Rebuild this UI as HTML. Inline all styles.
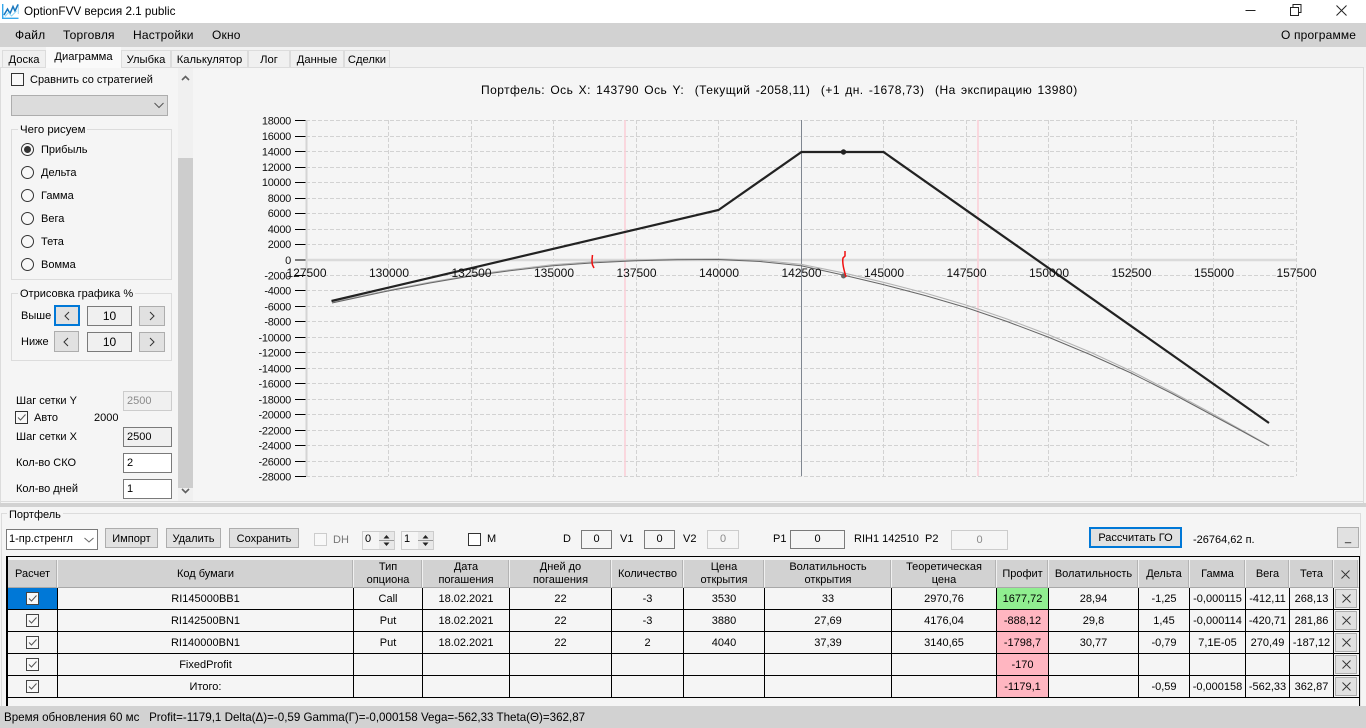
<!DOCTYPE html>
<html lang="ru"><head><meta charset="utf-8"><title>OptionFVV</title>
<style>
html,body{margin:0;padding:0;width:1366px;height:728px;overflow:hidden;background:#f5f5f5}
body{position:relative;font-family:"Liberation Sans",sans-serif;font-size:11px;color:#000}
.a{position:absolute;box-sizing:border-box}
.t{position:absolute;white-space:nowrap;line-height:14px;height:14px}
.b{position:absolute;box-sizing:border-box;background:#e1e1e1;border:1px solid #adadad;text-align:center;white-space:nowrap}
.i{position:absolute;box-sizing:border-box;background:#f5f5f5;border:1px solid #7a7a7a;text-align:center;white-space:nowrap}
.off{border-color:#ccc;color:#8a8a8a}
.tab{position:absolute;top:50px;height:17px;box-sizing:border-box;background:#f0f0f0;border:1px solid #dcdcdc;border-bottom:0;text-align:center;line-height:18px;font-size:11.2px}
.r{position:absolute;left:21px;width:13px;height:13px;border:1px solid #333;border-radius:50%;box-sizing:border-box;background:#f8f8f8}
.cb{position:absolute;width:13px;height:13px;box-sizing:border-box;border:1px solid #333;background:#f8f8f8}
.gb{position:absolute;box-sizing:border-box;border:1px solid #dcdcdc}
.lg{position:absolute;background:#f5f5f5;padding:0 2px;line-height:14px;white-space:nowrap;font-size:11px}
table{position:absolute;left:8px;top:560px;width:1351px;table-layout:fixed;border-collapse:separate;border-spacing:0}
th{height:28px;background:#d2d2d2;font-weight:normal;border-right:1px solid #f0f0f0;border-bottom:1px solid #a8a8a8;box-sizing:border-box;padding:1px 0 0;line-height:13px;box-shadow:inset -1px 0 0 #b4b4b4}
td{height:22px;box-sizing:border-box;border-right:1px solid #000;border-bottom:1px solid #000;text-align:center;padding:0;white-space:nowrap;position:relative;overflow:hidden}
td .cb{left:18px;top:4px;border-color:#444}
.g{background:#90ee90}.p{background:#ffb6c1}
.x{position:absolute;left:1px;top:1px;width:22px;height:19px;background:#e1e1e1;border:1px solid #adadad;box-sizing:border-box}
svg{display:block}
.chev{position:absolute}
</style></head><body>
<svg width="0" height="0" style="position:absolute"><symbol id="ck" viewBox="0 0 11 11"><path d="M2 5.500 4.500 8 9.500 2.500" fill="none" stroke="#555" stroke-width="1"/></symbol><symbol id="xx" viewBox="0 0 9 9"><path d="M.5.5 8.500 8.500M8.500.5.500 8.500" fill="none" stroke="#333" stroke-width=".9"/></symbol></svg>

<!-- title bar -->
<div class="a" style="left:0;top:0;width:1366px;height:23px;background:#fff"></div>
<svg class="a" style="left:2px;top:3px" width="17" height="16" viewBox="0 0 17 16"><path d="M.7 1V15.300H16.500" fill="none" stroke="#35a8ec" stroke-width="1.400"/><path d="M16.300 1V11" fill="none" stroke="#9fd6f5" stroke-width="1"/><path d="M2 12 5.500 6 8 10.500 11 3.500 13 8 16 1.500" fill="none" stroke="#1776bd" stroke-width="1.500"/><path d="M3 13.500 6.500 9.500 9.500 13 14.500 8" fill="none" stroke="#8fd8f8" stroke-width="1"/></svg>
<div class="t" style="left:24px;top:5px;font-size:11.7px">OptionFVV версия 2.1 public</div>
<svg class="a" style="left:1240px;top:0" width="120" height="20" viewBox="0 0 120 20"><path d="M5.500 10.500H15.500" stroke="#222"/><path d="M50.500 7.500H58.500V15.500H50.500ZM53 7V4.500H61V12.500H58.500" fill="none" stroke="#222"/><path d="M96.500 5.500 106.500 15.500M106.500 5.500 96.500 15.500" stroke="#222"/></svg>

<!-- menu -->
<div class="a" style="left:0;top:23px;width:1366px;height:24px;background:#d2d2d2"></div>
<div class="t" style="left:15px;top:28px;font-size:12px;letter-spacing:.2px">Файл</div>
<div class="t" style="left:63px;top:28px;font-size:12px;letter-spacing:.2px">Торговля</div>
<div class="t" style="left:133px;top:28px;font-size:12px;letter-spacing:.2px">Настройки</div>
<div class="t" style="left:212px;top:28px;font-size:12px;letter-spacing:.2px">Окно</div>
<div class="t" style="left:1281px;top:28px;font-size:12px;letter-spacing:.15px">О программе</div>

<!-- tabs -->
<div class="a" style="left:0;top:47px;width:1366px;height:21px;background:#f2f2f2"></div>
<div class="tab" style="left:2px;width:44px">Доска</div>
<div class="tab" style="left:46px;top:47px;width:75px;height:21px;background:#fafafa;border:0;line-height:20px">Диаграмма</div>
<div class="tab" style="left:121px;width:50px">Улыбка</div>
<div class="tab" style="left:171px;width:77px">Калькулятор</div>
<div class="tab" style="left:248px;width:42px">Лог</div>
<div class="tab" style="left:290px;width:54px">Данные</div>
<div class="tab" style="left:344px;width:46px">Сделки</div>
<div class="a" style="left:0;top:67px;width:46px;height:1px;background:#dcdcdc"></div>
<div class="a" style="left:121px;top:67px;width:1243px;height:1px;background:#dcdcdc"></div>
<div class="a" style="left:1363px;top:67px;width:1px;height:436px;background:#dcdcdc"></div>
<div class="a" style="left:0;top:67px;width:1px;height:436px;background:#dcdcdc"></div>

<!-- left panel -->
<div class="a" style="left:1px;top:68px;width:177px;height:433px;background:#f5f5f5"></div>
<div class="cb" style="left:11px;top:73px"></div>
<div class="t" style="left:30px;top:73px;font-size:11px">Сравнить со стратегией</div>
<div class="a" style="left:11px;top:95px;width:157px;height:21px;background:#dcdcdc;border:1px solid #adadad"></div>
<svg class="a" style="left:154px;top:102px" width="10" height="7"><path d="M.5 1 5 5.500 9.500 1" fill="none" stroke="#555"/></svg>

<div class="gb" style="left:11px;top:129px;width:161px;height:151px"></div>
<div class="lg" style="left:18px;top:123px;font-size:11.4px">Чего рисуем</div>
<div class="r" style="top:143px"></div><div class="a" style="left:24px;top:146px;width:7px;height:7px;border-radius:50%;background:#333"></div>
<div class="r" style="top:166px"></div><div class="r" style="top:189px"></div><div class="r" style="top:212px"></div><div class="r" style="top:235px"></div><div class="r" style="top:258px"></div>
<div class="t" style="left:41px;top:143px">Прибыль</div>
<div class="t" style="left:41px;top:166px">Дельта</div>
<div class="t" style="left:41px;top:189px">Гамма</div>
<div class="t" style="left:41px;top:212px">Вега</div>
<div class="t" style="left:41px;top:235px">Тета</div>
<div class="t" style="left:41px;top:258px">Вомма</div>

<div class="gb" style="left:11px;top:293px;width:161px;height:68px"></div>
<div class="lg" style="left:18px;top:287px">Отрисовка графика %</div>
<div class="t" style="left:21px;top:309px">Выше</div>
<div class="t" style="left:21px;top:335px">Ниже</div>
<div class="b" style="left:54px;top:305px;width:26px;height:21px;border:2px solid #0078d7"></div>
<svg class="chev" style="left:63px;top:311px" width="8" height="10"><path d="M6 1 2 5 6 9" fill="none" stroke="#333"/></svg>
<div class="i" style="left:87px;top:306px;width:45px;height:20px;line-height:18px;font-size:12px;background:#f0f0f0">10</div>
<div class="b" style="left:139px;top:306px;width:26px;height:20px"></div>
<svg class="chev" style="left:148px;top:311px" width="8" height="10"><path d="M2 1 6 5 2 9" fill="none" stroke="#333"/></svg>
<div class="b" style="left:54px;top:331px;width:25px;height:21px"></div>
<svg class="chev" style="left:62px;top:337px" width="8" height="10"><path d="M6 1 2 5 6 9" fill="none" stroke="#333"/></svg>
<div class="i" style="left:87px;top:332px;width:45px;height:20px;line-height:18px;font-size:12px;background:#f0f0f0">10</div>
<div class="b" style="left:139px;top:332px;width:26px;height:20px"></div>
<svg class="chev" style="left:148px;top:337px" width="8" height="10"><path d="M2 1 6 5 2 9" fill="none" stroke="#333"/></svg>

<div class="t" style="left:16px;top:394px">Шаг сетки Y</div>
<div class="i off" style="left:123px;top:391px;width:49px;height:20px;line-height:18px;text-align:left;padding-left:3px;background:#f0f0f0">2500</div>
<div class="cb" style="left:15px;top:411px"><svg width="11" height="11"><use href="#ck"/></svg></div>
<div class="t" style="left:34px;top:411px">Авто</div>
<div class="t" style="left:94px;top:411px">2000</div>
<div class="t" style="left:16px;top:430px">Шаг сетки X</div>
<div class="i" style="left:123px;top:427px;width:49px;height:20px;line-height:18px;text-align:left;padding-left:3px;background:#f0f0f0">2500</div>
<div class="t" style="left:16px;top:456px">Кол-во СКО</div>
<div class="i" style="left:123px;top:453px;width:49px;height:20px;line-height:18px;text-align:left;padding-left:3px;background:#fff">2</div>
<div class="t" style="left:16px;top:482px">Кол-во дней</div>
<div class="i" style="left:123px;top:479px;width:49px;height:20px;line-height:18px;text-align:left;padding-left:3px;background:#fff">1</div>

<!-- scrollbar -->
<div class="a" style="left:178px;top:68px;width:15px;height:433px;background:#f0f0f0"></div>
<div class="a" style="left:178px;top:158px;width:15px;height:330px;background:#cdcdcd"></div>
<svg class="a" style="left:181px;top:75px" width="9" height="6"><path d="M1 5 4.500 1.500 8 5" fill="none" stroke="#606060" stroke-width="1.600"/></svg>
<svg class="a" style="left:181px;top:488px" width="9" height="6"><path d="M1 1 4.500 4.500 8 1" fill="none" stroke="#606060" stroke-width="1.600"/></svg>

<!-- chart -->
<div class="t" style="left:481px;top:83px;font-size:12px;letter-spacing:.46px;word-spacing:1.5px">Портфель: Ось X: 143790 Ось Y:&nbsp; (Текущий -2058,11)&nbsp; (+1 дн. -1678,73)&nbsp; (На экспирацию 13980)</div>
<svg class="a" style="left:193px;top:100px" width="1170" height="400" viewBox="193 100 1170 400" font-family="'Liberation Sans',sans-serif" font-size="12" fill="#111">
<path d="M306 120.500H1296M306 136.500H1296M306 151.500H1296M306 167.500H1296M306 182.500H1296M306 198.500H1296M306 213.500H1296M306 229.500H1296M306 244.500H1296M306 275.500H1296M306 290.500H1296M306 306.500H1296M306 321.500H1296M306 337.500H1296M306 352.500H1296M306 368.500H1296M306 383.500H1296M306 399.500H1296M306 414.500H1296M306 430.500H1296M306 445.500H1296M306 461.500H1296M306 476.500H1296M388.500 120V476M471.500 120V476M553.500 120V476M636.500 120V476M718.500 120V476M883.500 120V476M966.500 120V476M1048.500 120V476M1131.500 120V476M1213.500 120V476M1296.500 120V476" fill="none" stroke="#d2d2d2" stroke-dasharray="4 2"/>
<path d="M295 120.500H306M295 136.500H306M295 151.500H306M295 167.500H306M295 182.500H306M295 198.500H306M295 213.500H306M295 229.500H306M295 244.500H306M295 260H306M295 275.500H306M295 290.500H306M295 306.500H306M295 321.500H306M295 337.500H306M295 352.500H306M295 368.500H306M295 383.500H306M295 399.500H306M295 414.500H306M295 430.500H306M295 445.500H306M295 461.500H306M295 476.500H306" stroke="#000"/>
<path d="M306.500 120V476" stroke="#d4d4d4" stroke-width="2"/>
<path d="M306 260H1296" stroke="#dadada" stroke-width="2.400"/>
<path d="M625 120V476M978 120V476" stroke="#fbd0d8" stroke-width="1.600"/>
<path d="M801.500 120V476" stroke="#7f8690" stroke-width="1"/>
<polyline points="332,302.500 360,296.300 388,290.300 430,282.200 471,275.200 512,269.500 553,264.700 595,261.700 636,260 677,259.100 718,258.900 760,260.300 801,264.300 843,272.800 883,282.200 925,293 966,305 1007,319 1048,334.500 1090,352 1131,371 1172,392 1213,414 1241,429.700 1269,445.500" fill="none" stroke="#b4b4b4" stroke-width="1.100"/>
<polyline points="332,303 360,297 388,291 430,283 471,276 512,270.500 553,265.700 595,262.700 636,260.800 677,259.800 718,259.500 760,261.500 801,265.800 843,275 883,284.500 925,295.500 966,307.500 1007,321.500 1048,337 1090,354.500 1131,373 1172,393.500 1213,415.500 1241,430.500 1269,446" fill="none" stroke="#666" stroke-width="1"/>
<path d="M331.500 301 718.500 210 801.500 152H883.500L1269 423" fill="none" stroke="#222" stroke-width="2.200"/>
<circle cx="843.500" cy="152" r="2.700" fill="#222"/>
<circle cx="843.500" cy="276" r="2.500" fill="#666"/>
<path d="M592.500 255C592 259 591.500 262 592.500 265L594 268M845 251V256L843 258C842 263 844 270 846 277" fill="none" stroke="#f01010" stroke-width="1.500"/>
<g text-anchor="end" font-size="11" letter-spacing="-.3">
<text x="291" y="124.500">18000</text><text x="291" y="140">16000</text><text x="291" y="155.500">14000</text><text x="291" y="171">12000</text><text x="291" y="186">10000</text><text x="291" y="202">8000</text><text x="291" y="217">6000</text><text x="291" y="233">4000</text><text x="291" y="248">2000</text><text x="291" y="264">0</text><text x="291" y="279.500">-2000</text><text x="291" y="294.500">-4000</text><text x="291" y="310.500">-6000</text><text x="291" y="325.500">-8000</text><text x="291" y="341.500">-10000</text><text x="291" y="356.500">-12000</text><text x="291" y="372.500">-14000</text><text x="291" y="387.500">-16000</text><text x="291" y="403.500">-18000</text><text x="291" y="418.500">-20000</text><text x="291" y="434.500">-22000</text><text x="291" y="449.500">-24000</text><text x="291" y="465.500">-26000</text><text x="291" y="480.500">-28000</text>
</g>
<g text-anchor="middle">
<text x="306.500" y="277">127500</text><text x="389" y="277">130000</text><text x="471.500" y="277">132500</text><text x="554" y="277">135000</text><text x="636.500" y="277">137500</text><text x="719" y="277">140000</text><text x="801.500" y="277">142500</text><text x="884" y="277">145000</text><text x="966.500" y="277">147500</text><text x="1049" y="277">150000</text><text x="1131.500" y="277">152500</text><text x="1214" y="277">155000</text><text x="1296.500" y="277">157500</text>
</g>
</svg>

<!-- splitter -->
<div class="a" style="left:0;top:501px;width:1364px;height:1px;background:#dcdcdc"></div>
<div class="a" style="left:0;top:503px;width:1366px;height:4px;background:#d2d2d2"></div>

<!-- portfolio -->
<div class="gb" style="left:1px;top:513px;width:1360px;height:200px"></div>
<div class="lg" style="left:7px;top:508px">Портфель</div>
<div class="i" style="left:6px;top:529px;width:92px;height:21px;background:#fff;text-align:left;padding-left:2px;line-height:19px">1-пр.стренгл</div>
<svg class="a" style="left:84px;top:537px" width="10" height="6"><path d="M.5 1 5 5 9.500 1" fill="none" stroke="#666"/></svg>
<div class="b" style="left:105px;top:528px;width:53px;height:20px;line-height:20px">Импорт</div>
<div class="b" style="left:166px;top:528px;width:55px;height:20px;line-height:20px">Удалить</div>
<div class="b" style="left:229px;top:528px;width:70px;height:20px;line-height:20px">Сохранить</div>
<div class="cb" style="left:314px;top:533px;border-color:#ccc;background:#f8f8f8"></div>
<div class="t" style="left:333px;top:533px;color:#777">DH</div>
<div class="i off" style="left:362px;top:531px;width:33px;height:19px;text-align:left;padding-left:2px;line-height:15px;color:#000">0</div>
<div class="i off" style="left:401px;top:531px;width:33px;height:19px;text-align:left;padding-left:2px;line-height:15px;color:#000">1</div>
<svg class="a" style="left:379px;top:532px" width="15" height="17"><rect width="15" height="17" fill="#e8e8e8"/><path d="M0 8.500H15" stroke="#999"/><path d="M4.500 6.500 7.500 3 10.500 6.500ZM4.500 10.500 7.500 14 10.500 10.500Z" fill="#222"/></svg>
<svg class="a" style="left:418px;top:532px" width="15" height="17"><rect width="15" height="17" fill="#e8e8e8"/><path d="M0 8.500H15" stroke="#999"/><path d="M4.500 6.500 7.500 3 10.500 6.500ZM4.500 10.500 7.500 14 10.500 10.500Z" fill="#222"/></svg>
<div class="cb" style="left:468px;top:533px;background:#fff"></div>
<div class="t" style="left:487px;top:532px">M</div>
<div class="t" style="left:563px;top:532px">D</div>
<div class="i" style="left:581px;top:530px;width:31px;height:19px;line-height:17px">0</div>
<div class="t" style="left:620px;top:532px">V1</div>
<div class="i" style="left:644px;top:530px;width:31px;height:19px;line-height:17px">0</div>
<div class="t" style="left:683px;top:532px">V2</div>
<div class="i off" style="left:707px;top:530px;width:32px;height:19px;line-height:17px">0</div>
<div class="t" style="left:773px;top:532px">P1</div>
<div class="i" style="left:790px;top:530px;width:55px;height:19px;line-height:17px">0</div>
<div class="t" style="left:854px;top:532px">RIH1 142510</div>
<div class="t" style="left:925px;top:532px">P2</div>
<div class="i off" style="left:951px;top:530px;width:57px;height:20px;line-height:18px">0</div>
<div class="b" style="left:1089px;top:527px;width:93px;height:21px;border:2px solid #0078d7;line-height:18px">Рассчитать ГО</div>
<div class="t" style="left:1193px;top:533px">-26764,62 п.</div>
<div class="b" style="left:1337px;top:527px;width:22px;height:21px;line-height:21px">_</div>

<!-- table -->
<div class="a" style="left:6px;top:556px;width:1354px;height:150px;border-top:1px solid #000;border-left:2px solid #000;border-right:1px solid #000;background:#f5f5f5"></div>
<table><colgroup><col style="width:50px"><col style="width:296px"><col style="width:69px"><col style="width:87px"><col style="width:102px"><col style="width:72px"><col style="width:81px"><col style="width:127px"><col style="width:105px"><col style="width:52px"><col style="width:90px"><col style="width:51px"><col style="width:56px"><col style="width:44px"><col style="width:44px"><col style="width:25px"></colgroup>
<tr><th>Расчет</th><th>Код бумаги</th><th>Тип<br>опциона</th><th>Дата<br>погашения</th><th>Дней до<br>погашения</th><th>Количество</th><th>Цена<br>открытия</th><th>Волатильность<br>открытия</th><th>Теоретическая<br>цена</th><th>Профит</th><th>Волатильность</th><th>Дельта</th><th>Гамма</th><th>Вега</th><th>Тета</th><th><svg width="9" height="9" style="margin:auto;position:relative;left:-1px"><use href="#xx"/></svg></th></tr>
<tr><td style="background:#0078d7"><div class="cb"><svg width="11" height="11"><use href="#ck"/></svg></div></td><td>RI145000BB1</td><td>Call</td><td>18.02.2021</td><td>22</td><td>-3</td><td>3530</td><td>33</td><td>2970,76</td><td class="g">1677,72</td><td>28,94</td><td>-1,25</td><td>-0,000115</td><td>-412,11</td><td>268,13</td><td style="border-right:0"><div class="x"><svg width="9" height="9" style="margin:4px auto"><use href="#xx"/></svg></div></td></tr>
<tr><td><div class="cb"><svg width="11" height="11"><use href="#ck"/></svg></div></td><td>RI142500BN1</td><td>Put</td><td>18.02.2021</td><td>22</td><td>-3</td><td>3880</td><td>27,69</td><td>4176,04</td><td class="p">-888,12</td><td>29,8</td><td>1,45</td><td>-0,000114</td><td>-420,71</td><td>281,86</td><td style="border-right:0"><div class="x"><svg width="9" height="9" style="margin:4px auto"><use href="#xx"/></svg></div></td></tr>
<tr><td><div class="cb"><svg width="11" height="11"><use href="#ck"/></svg></div></td><td>RI140000BN1</td><td>Put</td><td>18.02.2021</td><td>22</td><td>2</td><td>4040</td><td>37,39</td><td>3140,65</td><td class="p">-1798,7</td><td>30,77</td><td>-0,79</td><td>7,1E-05</td><td>270,49</td><td>-187,12</td><td style="border-right:0"><div class="x"><svg width="9" height="9" style="margin:4px auto"><use href="#xx"/></svg></div></td></tr>
<tr><td><div class="cb"><svg width="11" height="11"><use href="#ck"/></svg></div></td><td>FixedProfit</td><td></td><td></td><td></td><td></td><td></td><td></td><td></td><td class="p">-170</td><td></td><td></td><td></td><td></td><td></td><td style="border-right:0"><div class="x"><svg width="9" height="9" style="margin:4px auto"><use href="#xx"/></svg></div></td></tr>
<tr><td><div class="cb"><svg width="11" height="11"><use href="#ck"/></svg></div></td><td>Итого:</td><td></td><td></td><td></td><td></td><td></td><td></td><td></td><td class="p">-1179,1</td><td></td><td>-0,59</td><td>-0,000158</td><td>-562,33</td><td>362,87</td><td style="border-right:0"><div class="x"><svg width="9" height="9" style="margin:4px auto"><use href="#xx"/></svg></div></td></tr>
</table>

<!-- status -->
<div class="a" style="left:0;top:706px;width:1366px;height:22px;background:#d2d2d2"></div>
<div class="t" style="left:4px;top:711px;font-size:11.6px">Время обновления 60 мс&nbsp;&nbsp; Profit=-1179,1 Delta(Δ)=-0,59 Gamma(Г)=-0,000158 Vega=-562,33 Theta(Θ)=362,87</div>
</body></html>
